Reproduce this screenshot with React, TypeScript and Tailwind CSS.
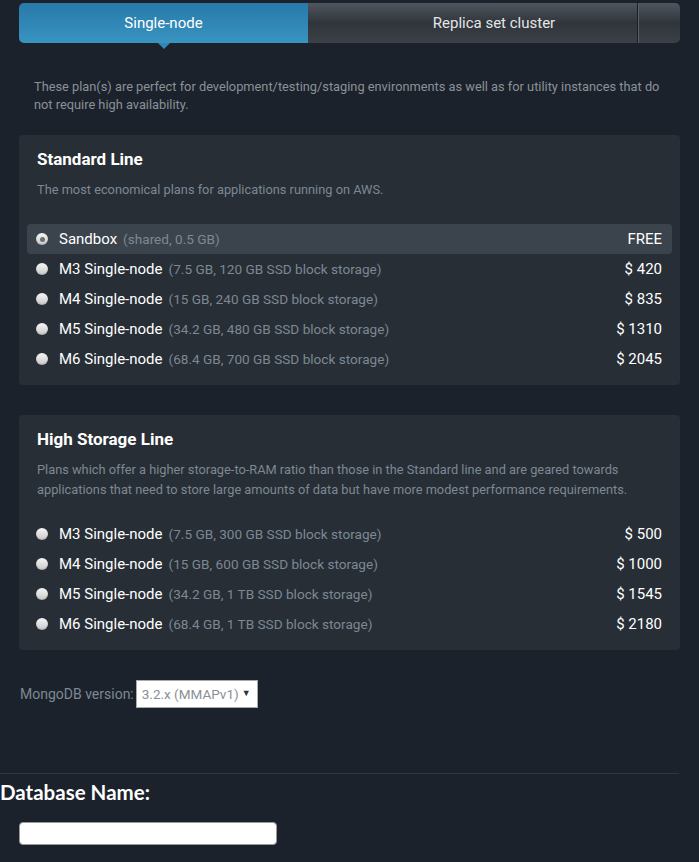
import React from 'react';

type Plan = { name: string; spec: string; price: string; selected?: boolean };

const standardPlans: Plan[] = [
  { name: 'Sandbox', spec: '(shared, 0.5 GB)', price: 'FREE', selected: true },
  { name: 'M3 Single-node', spec: '(7.5 GB, 120 GB SSD block storage)', price: '$ 420' },
  { name: 'M4 Single-node', spec: '(15 GB, 240 GB SSD block storage)', price: '$ 835' },
  { name: 'M5 Single-node', spec: '(34.2 GB, 480 GB SSD block storage)', price: '$ 1310' },
  { name: 'M6 Single-node', spec: '(68.4 GB, 700 GB SSD block storage)', price: '$ 2045' },
];

const storagePlans: Plan[] = [
  { name: 'M3 Single-node', spec: '(7.5 GB, 300 GB SSD block storage)', price: '$ 500' },
  { name: 'M4 Single-node', spec: '(15 GB, 600 GB SSD block storage)', price: '$ 1000' },
  { name: 'M5 Single-node', spec: '(34.2 GB, 1 TB SSD block storage)', price: '$ 1545' },
  { name: 'M6 Single-node', spec: '(68.4 GB, 1 TB SSD block storage)', price: '$ 2180' },
];

const Radio: React.FC<{ checked?: boolean }> = ({ checked }) => (
  <span className="w-[12px] h-[12px] rounded-full bg-gradient-to-b from-[#f6f6f6] to-[#c9c9c9] shadow-[inset_0_-1px_1px_rgba(0,0,0,0.15)] flex items-center justify-center shrink-0">
    {checked && <span className="w-[5px] h-[5px] rounded-full bg-[#6f6f6f]" />}
  </span>
);

const PlanRow: React.FC<{ plan: Plan }> = ({ plan }) => (
  <div
    className={`h-[30px] flex items-center pl-[9px] pr-[10px] rounded ${
      plan.selected ? 'bg-[#3b444d]' : ''
    }`}
  >
    <Radio checked={plan.selected} />
    <span className="ml-[11px] text-[15px] text-white">{plan.name}</span>
    <span className="ml-[6px] text-[13.6px] text-[#7d8893]">{plan.spec}</span>
    <span className="ml-auto text-[15px] text-white">{plan.price}</span>
  </div>
);

const PlanCard: React.FC<{ title: string; desc: React.ReactNode; plans: Plan[]; descGap: string }> = ({
  title,
  desc,
  plans,
  descGap,
}) => (
  <div className="mx-[19px] bg-[#272e36] rounded px-[8px] pt-[12px] pb-[11px]">
    <h2 className="px-[10px] text-[17px] font-bold text-white leading-[24px]">{title}</h2>
    <p className="px-[10px] mt-[9px] text-[12.8px] leading-[20px] text-[#7d8893]">{desc}</p>
    <div className={descGap}>
      {plans.map((p) => (
        <PlanRow key={p.name} plan={p} />
      ))}
    </div>
  </div>
);

export default function App() {
  return (
    <div className="min-h-screen w-full bg-[#1c222b] font-['Roboto',sans-serif] pt-[3px] pb-[16px]">
      {/* tabs */}
      <div className="relative mx-[19px] h-[40px] flex rounded-[5px]">
        <div className="w-[289px] h-full flex items-center justify-center rounded-l-[5px] bg-gradient-to-b from-[#2779a8] to-[#3994c2] text-white text-[15px] relative">
          Single-node
          <span className="absolute left-1/2 -translate-x-1/2 top-full w-0 h-0 border-l-[6px] border-r-[6px] border-t-[6px] border-l-transparent border-r-transparent border-t-[#2f88b8]" />
        </div>
        <div className="relative flex-1 h-full flex items-center justify-center rounded-r-[5px] bg-gradient-to-b from-[#50565d] via-[#2f353b] to-[#3b4147] text-[#e4e6e8] text-[15px]">
          Replica set cluster
          <span className="absolute right-[41px] top-0 h-full w-[2px] border-l border-[#1a1e23] border-r border-r-[#5a6067]" />
        </div>
      </div>

      <p className="mt-[35px] px-[34px] text-[12.8px] leading-[18px] text-[#8a9199]">
        These plan(s) are perfect for development/testing/staging environments as well as for utility instances that do
        not require high availability.
      </p>

      <div className="mt-[21px]">
        <PlanCard
          title="Standard Line"
          desc="The most economical plans for applications running on AWS."
          plans={standardPlans}
          descGap="mt-[24px]"
        />
      </div>

      <div className="mt-[30px]">
        <PlanCard
          title="High Storage Line"
          desc="Plans which offer a higher storage-to-RAM ratio than those in the Standard line and are geared towards applications that need to store large amounts of data but have more modest performance requirements."
          plans={storagePlans}
          descGap="mt-[19px]"
        />
      </div>

      <div className="mt-[30px] ml-[20px] flex items-center gap-[2px]">
        <span className="text-[14px] text-[#7d8893] whitespace-nowrap">MongoDB version:</span>
        <div className="w-[122px] h-[28px] bg-white border border-[#aaaaaa] flex items-center pl-[5px] pr-[6px] whitespace-nowrap">
          <span className="text-[13.5px] text-[#8a8f95]">3.2.x (MMAPv1)</span>
          <span className="ml-auto text-[9px] text-[#333]">▼</span>
        </div>
      </div>

      <div className="mt-[65px] w-[679px] border-t border-[#2f363e]" />

      <h3 className="mt-[5px] font-['Lato',sans-serif] font-bold text-[20.5px] leading-[26px] text-white">
        Database Name:
      </h3>

      <div className="mt-[17px] ml-[19px] w-[258px] h-[23px] bg-white rounded-[4px] border border-[#999]" />
    </div>
  );
}
